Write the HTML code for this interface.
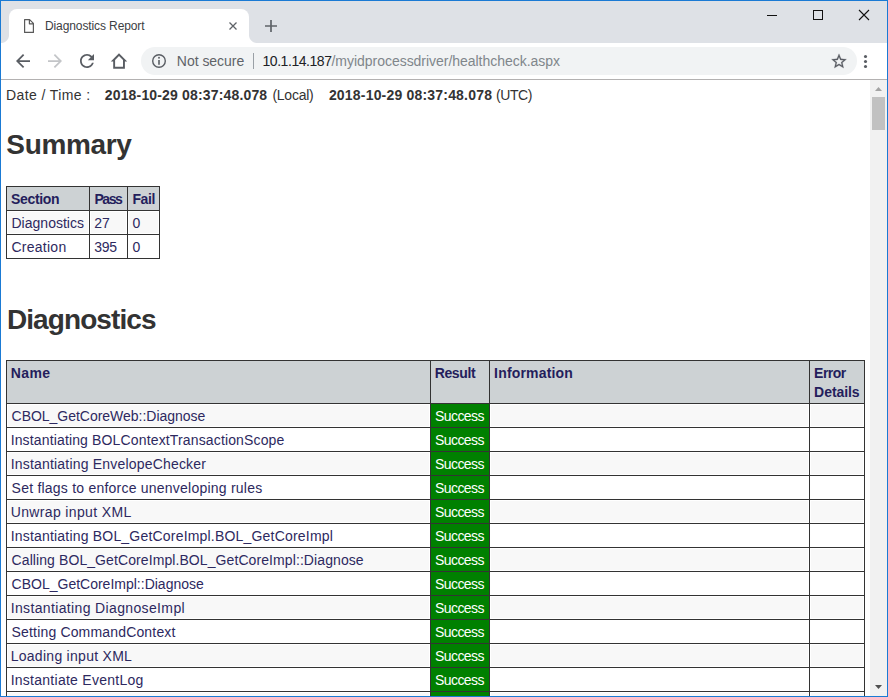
<!DOCTYPE html>
<html>
<head>
<meta charset="utf-8">
<title>Diagnostics Report</title>
<style>
*{box-sizing:border-box;}
html,body{margin:0;padding:0;width:888px;height:697px;overflow:hidden;background:#fff;}
body{font-family:"Liberation Sans",sans-serif;position:relative;}
div,svg,h1{position:absolute;margin:0;}
svg{overflow:visible;}
.tx{white-space:nowrap;line-height:1;}
#strip{left:0;top:0;width:888px;height:43px;background:#dee1e6;}
#tabsh{left:9px;top:9px;width:240px;height:34px;background:#fff;border-radius:8px 8px 0 0;}
.fl{width:8px;height:8px;top:35px;}
#toolbar{left:0;top:43px;width:888px;height:37px;background:#fff;border-bottom:1px solid #b3b1b1;}
#omni{left:141px;top:47px;width:716px;height:28px;border-radius:14px;background:#f1f3f4;}
#sep{left:253px;top:53px;width:1px;height:16px;background:#9aa0a6;}
#page{left:1px;top:80px;width:869px;height:616px;overflow:hidden;background:#fff;}
#sb{left:870px;top:80px;width:17px;height:616px;background:#f1f1f1;}
#thumb{left:872px;top:97px;width:13px;height:33px;background:#c1c1c1;}
#frame{left:0;top:0;width:888px;height:697px;border:1px solid #1a7ad4;pointer-events:none;}
table{position:absolute;border-collapse:collapse;table-layout:fixed;color:#241e5c;font-size:14px;}
td,th{border:1px solid #333;padding:4px 0 0 5px;text-align:left;vertical-align:top;white-space:nowrap;overflow:hidden;line-height:16px;height:24px;font-weight:normal;}
th{background:#cdd2d4;font-weight:bold;font-size:14px;}
tr.a td{background:#f8f8f8;box-shadow:inset 0 0 0 1px #fff;}
td{color:#2d2960;}
td.ok{background:#008000 !important;color:#fff;box-shadow:none !important;}
td span,th span{display:inline-block;}
</style>
</head>
<body>
<div id="strip"></div>
<div id="tabsh"></div>
<div class="fl" style="left:1px;background:radial-gradient(circle at 0 0,rgba(255,255,255,0) 7.5px,#fff 8.5px)"></div>
<div class="fl" style="left:249px;background:radial-gradient(circle at 100% 0,rgba(255,255,255,0) 7.5px,#fff 8.5px)"></div>
<svg style="left:24px;top:19px" width="10" height="14" viewBox="0 0 10 14"><path d="M0.6 0.6h5l3.8 3.8v9h-8.800z M5.400 0.800v4h4" fill="none" stroke="#5a5a5a" stroke-width="1.2" stroke-linejoin="round"/></svg>
<div id="tab" class="tx" style="left:45.00px;top:19.50px;letter-spacing:-0.106px;font-size:12px;color:#3c4043;">Diagnostics Report</div>
<svg style="left:229px;top:22px" width="8" height="8" viewBox="0 0 8 8"><path d="M0.500 0.500l7 7M7.500 0.500l-7 7" stroke="#5f6368" stroke-width="1.300" fill="none"/></svg>
<svg style="left:265px;top:20px" width="12" height="12" viewBox="0 0 12 12"><path d="M6 0v12M0 6h12" stroke="#5f6368" stroke-width="1.700" fill="none"/></svg>
<div style="left:767px;top:15px;width:10px;height:1px;background:#111"></div>
<div style="left:813px;top:10px;width:10px;height:10px;border:1px solid #111"></div>
<svg style="left:859px;top:10px" width="10" height="10" viewBox="0 0 10 10"><path d="M0 0l10 10M10 0l-10 10" stroke="#111" stroke-width="1.100" fill="none"/></svg>
<div id="toolbar"></div>
<svg style="left:0;top:0" width="888" height="80"><path transform="translate(12.5,50.5) scale(0.875)" fill="#595d63" d="M20 11H7.830l5.590-5.590L12 4l-8 8 8 8 1.410-1.410L7.830 13H20v-2z"/><path transform="translate(44.500,50.500) scale(0.875)" fill="#c3c5c8" d="M12 4l-1.410 1.410L16.170 11H4v2h12.170l-5.580 5.590L12 20l8-8z"/><path transform="translate(76.500,50.500) scale(0.875)" fill="#595d63" d="M17.650 6.350C16.200 4.900 14.210 4 12 4c-4.420 0-7.990 3.580-7.990 8s3.570 8 7.990 8c3.730 0 6.840-2.550 7.730-6h-2.080c-.82 2.330-3.040 4-5.650 4-3.310 0-6-2.690-6-6s2.690-6 6-6c1.660 0 3.140.69 4.220 1.780L13 11h7V4l-2.350 2.350z"/><path fill="#595d63" fill-rule="evenodd" d="M119 53.200L127.200 61.500H124.900V68.700H113.200V61.500H110.800z M119 56L123 60V66.800H115.100V60z"/></svg>
<div id="omni"></div>
<svg style="left:152px;top:54px" width="14" height="14" viewBox="0 0 14 14"><circle cx="7" cy="7" r="6.300" stroke="#595d63" stroke-width="1.400" fill="none"/><path d="M7 5.900v4.800" stroke="#595d63" stroke-width="1.600"/><circle cx="7" cy="3.800" r="0.950" fill="#595d63"/></svg>
<div id="ns" class="tx" style="left:176.82px;top:54.00px;letter-spacing:-0.025px;font-size:14px;color:#5f6368;">Not secure</div>
<div id="sep"></div>
<div id="host" class="tx" style="left:262.50px;top:54.00px;letter-spacing:-0.452px;font-size:14px;color:#202124;">10.1.14.187</div>
<div id="path" class="tx" style="left:331.50px;top:54.00px;letter-spacing:-0.031px;font-size:14px;color:#80868b;">/myidprocessdriver/healthcheck.aspx</div>
<svg style="left:0;top:0" width="888" height="80"><path transform="translate(830,52.300) scale(0.75)" fill="#595d63" stroke="#595d63" stroke-width="0.3" d="M22 9.240l-7.190-.62L12 2 9.190 8.630 2 9.240l5.460 4.730L5.820 21 12 17.270 18.180 21l-1.630-7.030L22 9.240zM12 15.400l-3.760 2.270 1-4.280-3.320-2.880 4.380-.38L12 6.100l1.710 4.040 4.380.38-3.320 2.880 1 4.280L12 15.400z"/><circle cx="865.500" cy="56.500" r="1.550" fill="#595d63"/><circle cx="865.500" cy="61.500" r="1.550" fill="#595d63"/><circle cx="865.500" cy="66.500" r="1.550" fill="#595d63"/></svg>
<div id="page">
<div id="dt1" class="tx" style="left:5.00px;top:8.00px;letter-spacing:0.396px;font-size:14px;color:#333;">Date / Time :</div>
<div id="dt2" class="tx" style="left:103.76px;top:8.00px;letter-spacing:0.164px;font-size:14px;color:#333;font-weight:bold;">2018-10-29 08:37:48.078</div>
<div id="dt3" class="tx" style="left:271.40px;top:8.00px;letter-spacing:-0.240px;font-size:14px;color:#333;">(Local)</div>
<div id="dt4" class="tx" style="left:327.90px;top:8.00px;letter-spacing:0.193px;font-size:14px;color:#333;font-weight:bold;">2018-10-29 08:37:48.078</div>
<div id="dt5" class="tx" style="left:495.04px;top:8.00px;letter-spacing:-0.450px;font-size:14px;color:#333;">(UTC)</div>
<h1 id="h1a" class="tx" style="left:5.36px;top:51.00px;letter-spacing:-0.374px;font-size:28px;font-weight:bold;color:#333;">Summary</h1>
<h1 id="h1b" class="tx" style="left:5.90px;top:225.50px;letter-spacing:-0.900px;font-size:28px;font-weight:bold;color:#333;">Diagnostics</h1>
<table style="left:5px;top:106px;width:153px"><colgroup><col style="width:83px"><col style="width:38px"><col style="width:32px"></colgroup>
<tr><th><span id="s_h1" style="letter-spacing:-0.360px;margin-left:-0.90px">Section</span></th><th><span id="s_h2" style="letter-spacing:-1.440px;margin-left:-0.54px">Pass</span></th><th><span id="s_h3" style="letter-spacing:-0.420px;margin-left:-0.54px">Fail</span></th></tr>
<tr class="a"><td><span id="s_11" style="letter-spacing:0.018px;margin-left:-0.54px">Diagnostics</span></td><td><span id="s_12" style="letter-spacing:-0.180px;margin-left:-0.72px">27</span></td><td><span id="s_13" style="letter-spacing:0.000px;margin-left:-0.54px">0</span></td></tr>
<tr><td><span id="s_21" style="letter-spacing:0.256px;margin-left:-0.54px">Creation</span></td><td><span id="s_22" style="letter-spacing:-0.270px;margin-left:-0.72px">395</span></td><td><span id="s_23" style="letter-spacing:0.000px;margin-left:-0.54px">0</span></td></tr>
</table>
<table style="left:5px;top:280px;width:858px"><colgroup><col style="width:424px"><col style="width:59px"><col style="width:320px"><col style="width:55px"></colgroup>
<tr><th style="height:43px;padding-top:4px"><span id="m_h1" style="letter-spacing:0.450px;margin-left:-1.35px">Name</span></th><th style="padding-top:4px"><span id="m_h2" style="letter-spacing:-0.360px;margin-left:-1.35px">Result</span></th><th style="padding-top:4px"><span id="m_h3" style="letter-spacing:0.180px;margin-left:-0.90px">Information</span></th><th style="padding-top:3px;line-height:18.5px"><span id="m_h4a" style="letter-spacing:-0.531px;margin-left:-0.90px">Error</span><br><span id="m_h4b" style="letter-spacing:-0.060px;margin-left:-0.90px">Details</span></th></tr>
<tr class="a"><td><span id="r0" style="letter-spacing:-0.023px;margin-left:-0.43px">CBOL_GetCoreWeb::Diagnose</span></td><td class="ok"><span id="k0" style="letter-spacing:-0.600px;margin-left:-0.90px">Success</span></td><td></td><td></td></tr>
<tr><td><span id="r1" style="letter-spacing:0.146px;margin-left:-1.35px">Instantiating BOLContextTransactionScope</span></td><td class="ok"><span id="k1" style="letter-spacing:-0.600px;margin-left:-0.90px">Success</span></td><td></td><td></td></tr>
<tr class="a"><td><span id="r2" style="letter-spacing:0.193px;margin-left:-1.35px">Instantiating EnvelopeChecker</span></td><td class="ok"><span id="k2" style="letter-spacing:-0.600px;margin-left:-0.90px">Success</span></td><td></td><td></td></tr>
<tr><td><span id="r3" style="letter-spacing:0.225px;margin-left:-0.43px">Set flags to enforce unenveloping rules</span></td><td class="ok"><span id="k3" style="letter-spacing:-0.600px;margin-left:-0.90px">Success</span></td><td></td><td></td></tr>
<tr class="a"><td><span id="r4" style="letter-spacing:0.360px;margin-left:-1.35px">Unwrap input XML</span></td><td class="ok"><span id="k4" style="letter-spacing:-0.600px;margin-left:-0.90px">Success</span></td><td></td><td></td></tr>
<tr><td><span id="r5" style="letter-spacing:0.195px;margin-left:-1.35px">Instantiating BOL_GetCoreImpl.BOL_GetCoreImpl</span></td><td class="ok"><span id="k5" style="letter-spacing:-0.600px;margin-left:-0.90px">Success</span></td><td></td><td></td></tr>
<tr class="a"><td><span id="r6" style="letter-spacing:0.088px;margin-left:-0.43px">Calling BOL_GetCoreImpl.BOL_GetCoreImpl::Diagnose</span></td><td class="ok"><span id="k6" style="letter-spacing:-0.600px;margin-left:-0.90px">Success</span></td><td></td><td></td></tr>
<tr><td><span id="r7" style="letter-spacing:-0.000px;margin-left:-0.43px">CBOL_GetCoreImpl::Diagnose</span></td><td class="ok"><span id="k7" style="letter-spacing:-0.600px;margin-left:-0.90px">Success</span></td><td></td><td></td></tr>
<tr class="a"><td><span id="r8" style="letter-spacing:0.360px;margin-left:-1.35px">Instantiating DiagnoseImpl</span></td><td class="ok"><span id="k8" style="letter-spacing:-0.600px;margin-left:-0.90px">Success</span></td><td></td><td></td></tr>
<tr><td><span id="r9" style="letter-spacing:0.167px;margin-left:-0.43px">Setting CommandContext</span></td><td class="ok"><span id="k9" style="letter-spacing:-0.600px;margin-left:-0.90px">Success</span></td><td></td><td></td></tr>
<tr class="a"><td><span id="r10" style="letter-spacing:0.281px;margin-left:-1.35px">Loading input XML</span></td><td class="ok"><span id="k10" style="letter-spacing:-0.600px;margin-left:-0.90px">Success</span></td><td></td><td></td></tr>
<tr><td><span id="r11" style="letter-spacing:0.261px;margin-left:-1.35px">Instantiate EventLog</span></td><td class="ok"><span id="k11" style="letter-spacing:-0.600px;margin-left:-0.90px">Success</span></td><td></td><td></td></tr>
<tr class="a"><td>&nbsp;</td><td class="ok">&nbsp;</td><td></td><td></td></tr>
</table>
</div>
<div id="sb"></div><div id="thumb"></div>
<svg style="left:0;top:0" width="888" height="697"><path d="M875 91L878.500 87 882 91z" fill="#a3a3a3"/><path d="M875 685L878.500 689 882 685z" fill="#505050"/></svg>
<div id="frame"></div>
</body>
</html>
